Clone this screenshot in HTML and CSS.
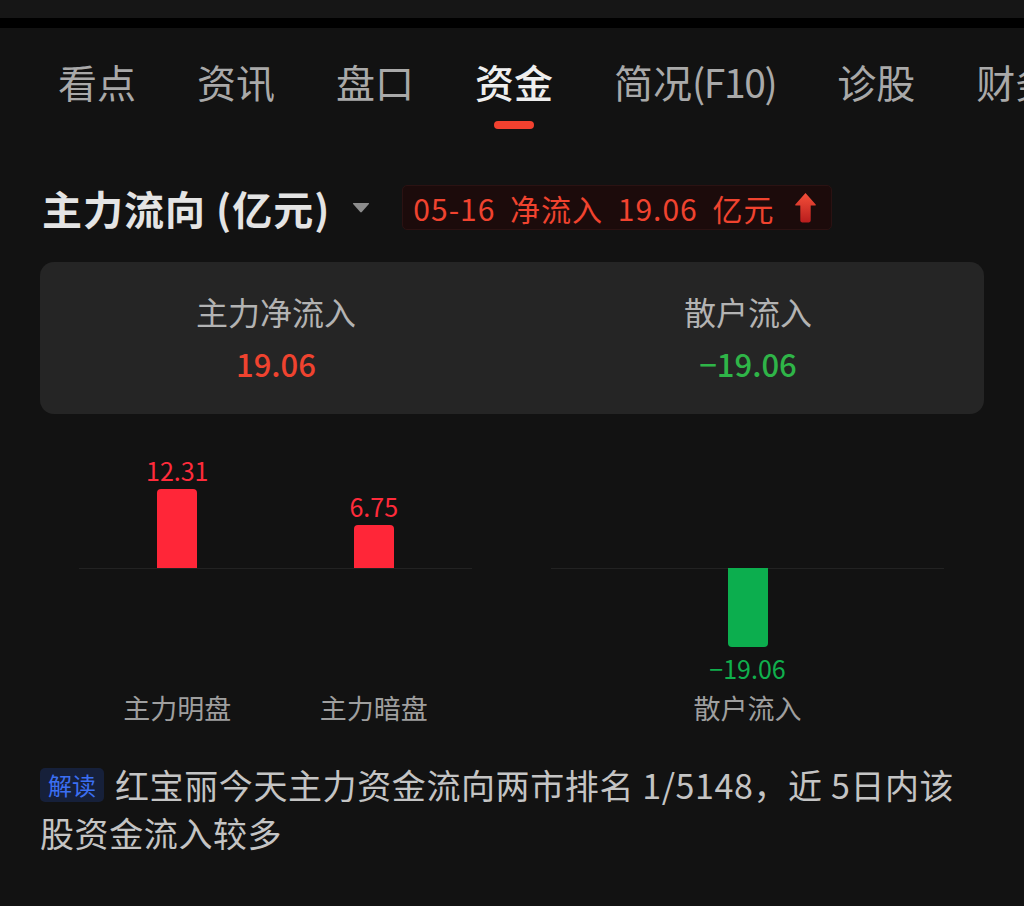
FILE: index.html
```html
<!DOCTYPE html>
<html lang="zh-CN">
<head>
<meta charset="utf-8">
<title>资金</title>
<link rel="stylesheet" href="styles.css">
</head>
<body>
<div class="statusbar"></div>
<div class="topline"></div>
<nav class="tabs">
  <div class="tab"><span>看点</span></div>
  <div class="tab"><span>资讯</span></div>
  <div class="tab"><span>盘口</span></div>
  <div class="tab active"><span>资金</span></div>
  <div class="tab"><span>简况<span class="tight">(F10)</span></span></div>
  <div class="tab"><span>诊股</span></div>
  <div class="tab"><span>财务</span></div>
</nav>

<div class="title-row">
  <div class="title">主力流向 (亿元)</div>
  <svg class="caret" viewBox="0 0 18 11" width="18" height="11"><path d="M1.5 1 H16.5 Q17.6 1 16.9 1.9 L9.8 10 Q9 10.8 8.2 10 L1.1 1.9 Q0.4 1 1.5 1 Z" fill="#8c8c8c"/></svg>
  <div class="badge">
    <span>05-16 净流入 19.06 亿元</span>
    <svg class="arrow" viewBox="0 0 22 31" width="23" height="31">
      <defs><linearGradient id="ag" x1="0" y1="0" x2="0" y2="1"><stop offset="0" stop-color="#f5503a"/><stop offset="1" stop-color="#b91d1d"/></linearGradient></defs>
      <path d="M11 1 L21.2 12.6 Q21.9 13.6 20.6 13.6 H16.2 V28.6 Q16.2 30.4 14.4 30.4 H7.6 Q5.8 30.4 5.8 28.6 V13.6 H1.4 Q0.1 13.6 0.8 12.6 Z" fill="url(#ag)"/>
    </svg>
  </div>
</div>

<section class="summary">
  <div class="sum-col">
    <div class="sum-label">主力净流入</div>
    <div class="sum-val red">19.06</div>
  </div>
  <div class="sum-col">
    <div class="sum-label">散户流入</div>
    <div class="sum-val green">−19.06</div>
  </div>
</section>

<section class="charts">
  <div class="chart">
    <div class="slot">
      <div class="upper">
        <div class="val red">12.31</div>
        <div class="bar up" style="height:79px"></div>
      </div>
      <div class="lower"></div>
      <div class="cat">主力明盘</div>
    </div>
    <div class="slot">
      <div class="upper">
        <div class="val red">6.75</div>
        <div class="bar up" style="height:43px"></div>
      </div>
      <div class="lower"></div>
      <div class="cat">主力暗盘</div>
    </div>
  </div>
  <div class="chart">
    <div class="slot">
      <div class="upper"></div>
      <div class="lower">
        <div class="bar down" style="height:79px"></div>
        <div class="val neg green">−19.06</div>
      </div>
      <div class="cat">散户流入</div>
    </div>
  </div>
</section>

<p class="interp"><span class="tag">解读</span>红宝丽今天主力资金流向两市排名 1/5148，近 5日内该股资金流入较多</p>
</body>
</html>
```

FILE: styles.css
```css
html, body {
  margin: 0;
  padding: 0;
}
body {
  background: #121212;
  font-family: "Noto Sans CJK SC", "Noto Sans", sans-serif;
  width: 1024px;
  height: 906px;
  overflow: hidden;
}
.statusbar {
  height: 18px;
  background: #161616;
}
.topline {
  height: 10px;
  background: #000;
}
.tabs {
  display: flex;
  gap: 61px;
  padding: 34px 0 0 58px;
  white-space: nowrap;
  overflow: hidden;
}
.tab {
  flex-shrink: 0;
  display: flex;
  flex-direction: column;
  align-items: center;
  font-size: 39px;
  line-height: 39px;
  color: #a9a9a9;
}
.tab .tight {
  letter-spacing: -1.4px;
}
.tab::after {
  content: "";
  width: 40px;
  height: 8px;
  border-radius: 4px;
  margin-top: 20px;
  background: transparent;
}
.tab.active {
  color: #eeeeee;
  font-weight: 500;
}
.tab.active::after {
  background: #f2412f;
}

.title-row {
  display: flex;
  align-items: center;
  margin-top: 56px;
  padding-left: 42px;
}
.title {
  font-size: 40px;
  line-height: 40px;
  font-weight: 700;
  letter-spacing: 1px;
  color: #e4e4e4;
}
.caret {
  margin-left: 22px;
  display: block;
}
.badge {
  margin-left: 32px;
  height: 45px;
  box-sizing: border-box;
  display: flex;
  align-items: center;
  gap: 20px;
  padding: 0 14px 0 10px;
  background: #1c0b0b;
  border: 1px solid #2b1212;
  border-radius: 5px;
  color: #f0432f;
  font-size: 30px;
  line-height: 30px;
  letter-spacing: 1px;
  word-spacing: 7px;
  white-space: nowrap;
}
.arrow {
  display: block;
}

.summary {
  margin: 32px 40px 0;
  height: 152px;
  box-sizing: border-box;
  padding-top: 33px;
  background: #252525;
  border-radius: 14px;
  display: grid;
  grid-template-columns: 1fr 1fr;
  text-align: center;
}
.sum-label {
  font-size: 32px;
  line-height: 32px;
  color: #b3b3b3;
}
.sum-val {
  margin-top: 21px;
  font-size: 31px;
  line-height: 32px;
  font-weight: 500;
}
.red { color: #f0432f; }
.green { color: #2fb548; }

.charts {
  display: grid;
  grid-template-columns: 1fr 1fr;
  margin: 26px 40px 0;
}
.chart {
  display: flex;
  padding: 0 40px 0 39px;
}
.slot {
  flex: 1;
  display: flex;
  flex-direction: column;
  align-items: center;
}
.upper {
  height: 128px;
  align-self: stretch;
  display: flex;
  flex-direction: column;
  justify-content: flex-end;
  align-items: center;
}
.lower {
  height: 126px;
  align-self: stretch;
  box-sizing: border-box;
  border-top: 1px solid #222222;
  display: flex;
  flex-direction: column;
  align-items: center;
}
.val {
  font-size: 25px;
  line-height: 25px;
  margin-bottom: 6px;
}
.val.red { color: #ff2b3b; }
.val.neg {
  margin-bottom: 0;
  margin-top: 9px;
  color: #10b04d;
}
.bar {
  width: 40px;
}
.bar.up {
  background: #ff2638;
  border-radius: 4px 4px 0 0;
}
.bar.down {
  margin-top: -1px;
  background: #0cae4e;
  border-radius: 0 0 4px 4px;
}
.cat {
  font-size: 27px;
  line-height: 27px;
  color: #9f9f9f;
}

.interp {
  margin: 40px 40px 0;
  font-size: 34px;
  line-height: 48px;
  letter-spacing: 0.6px;
  color: #c4c4c4;
}
.tag {
  display: inline-block;
  vertical-align: top;
  margin: 7px 11px 0 0;
  padding: 0 8px;
  height: 34px;
  line-height: 34px;
  font-size: 24px;
  letter-spacing: 0;
  color: #3b6ff2;
  background: #16203a;
  border-radius: 5px;
}
```
